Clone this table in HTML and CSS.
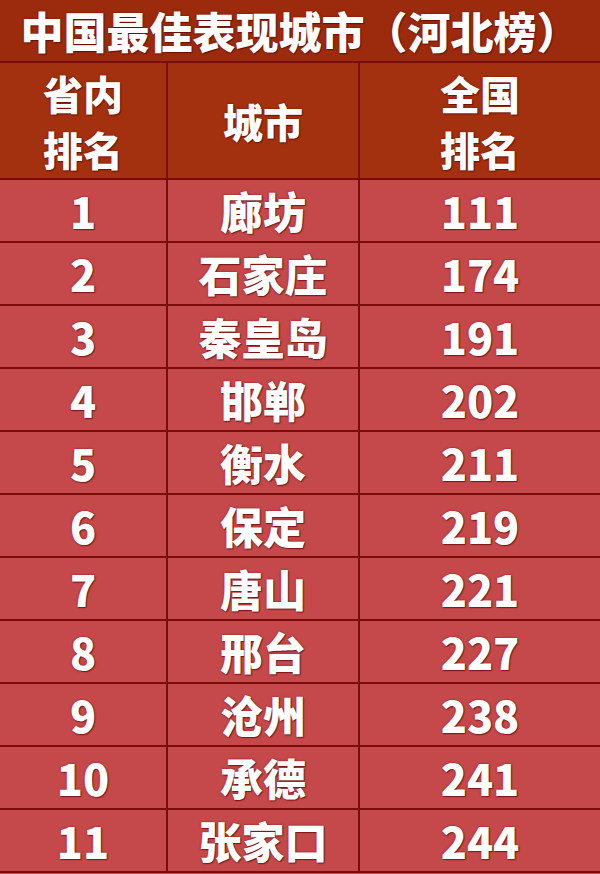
FILE: index.html
```html
<!DOCTYPE html>
<html lang="zh-CN">
<head>
<meta charset="utf-8">
<title>中国最佳表现城市（河北榜）</title>
<link rel="stylesheet" href="styles.css">
</head>
<body>
<div class="page">
  <div class="title">中国最佳表现城市（河北榜）</div>
  <div class="table">
    <div class="cell head">省内<br>排名</div>
    <div class="cell head">城市</div>
    <div class="cell head last">全国<br>排名</div>

    <div class="cell">1</div><div class="cell">廊坊</div><div class="cell last">111</div>
    <div class="cell">2</div><div class="cell">石家庄</div><div class="cell last">174</div>
    <div class="cell">3</div><div class="cell">秦皇岛</div><div class="cell last">191</div>
    <div class="cell">4</div><div class="cell">邯郸</div><div class="cell last">202</div>
    <div class="cell">5</div><div class="cell">衡水</div><div class="cell last">211</div>
    <div class="cell">6</div><div class="cell">保定</div><div class="cell last">219</div>
    <div class="cell">7</div><div class="cell">唐山</div><div class="cell last">221</div>
    <div class="cell">8</div><div class="cell">邢台</div><div class="cell last">227</div>
    <div class="cell">9</div><div class="cell">沧州</div><div class="cell last">238</div>
    <div class="cell">10</div><div class="cell">承德</div><div class="cell last">241</div>
    <div class="cell">11</div><div class="cell">张家口</div><div class="cell last">244</div>
  </div>
</div>
</body>
</html>
```
FILE: styles.css
```css
html, body {
  margin: 0;
  padding: 0;
  background: #c5484a;
}
.page {
  width: 600px;
  height: 874px;
  overflow: hidden;
  font-family: "Noto Sans CJK SC", "Noto Sans", sans-serif;
  font-weight: 900;
  color: #ffffff;
  text-shadow: 0 0 2px rgba(90, 0, 0, 0.7), 1px 1px 1px rgba(90, 0, 0, 0.6);
}
.title {
  box-sizing: border-box;
  height: 63px;
  background: #9c2a0d;
  border-bottom: 2px solid #7a0c0a;
  font-size: 43px;
  line-height: 60px;
  text-align: center;
  white-space: nowrap;
}
.table {
  display: grid;
  grid-template-columns: 168px 192px 240px;
  grid-template-rows: 117px;
  grid-auto-rows: 63px;
}
.cell {
  box-sizing: border-box;
  border-right: 2px solid #7a0c0a;
  border-bottom: 2px solid #7a0c0a;
  display: flex;
  align-items: center;
  justify-content: center;
  text-align: center;
  font-size: 43px;
  line-height: 1;
  background: #c5484a;
}
.cell.last {
  border-right: none;
}
.cell.head {
  background: #a3300e;
  font-size: 40px;
  line-height: 56px;
}
```
